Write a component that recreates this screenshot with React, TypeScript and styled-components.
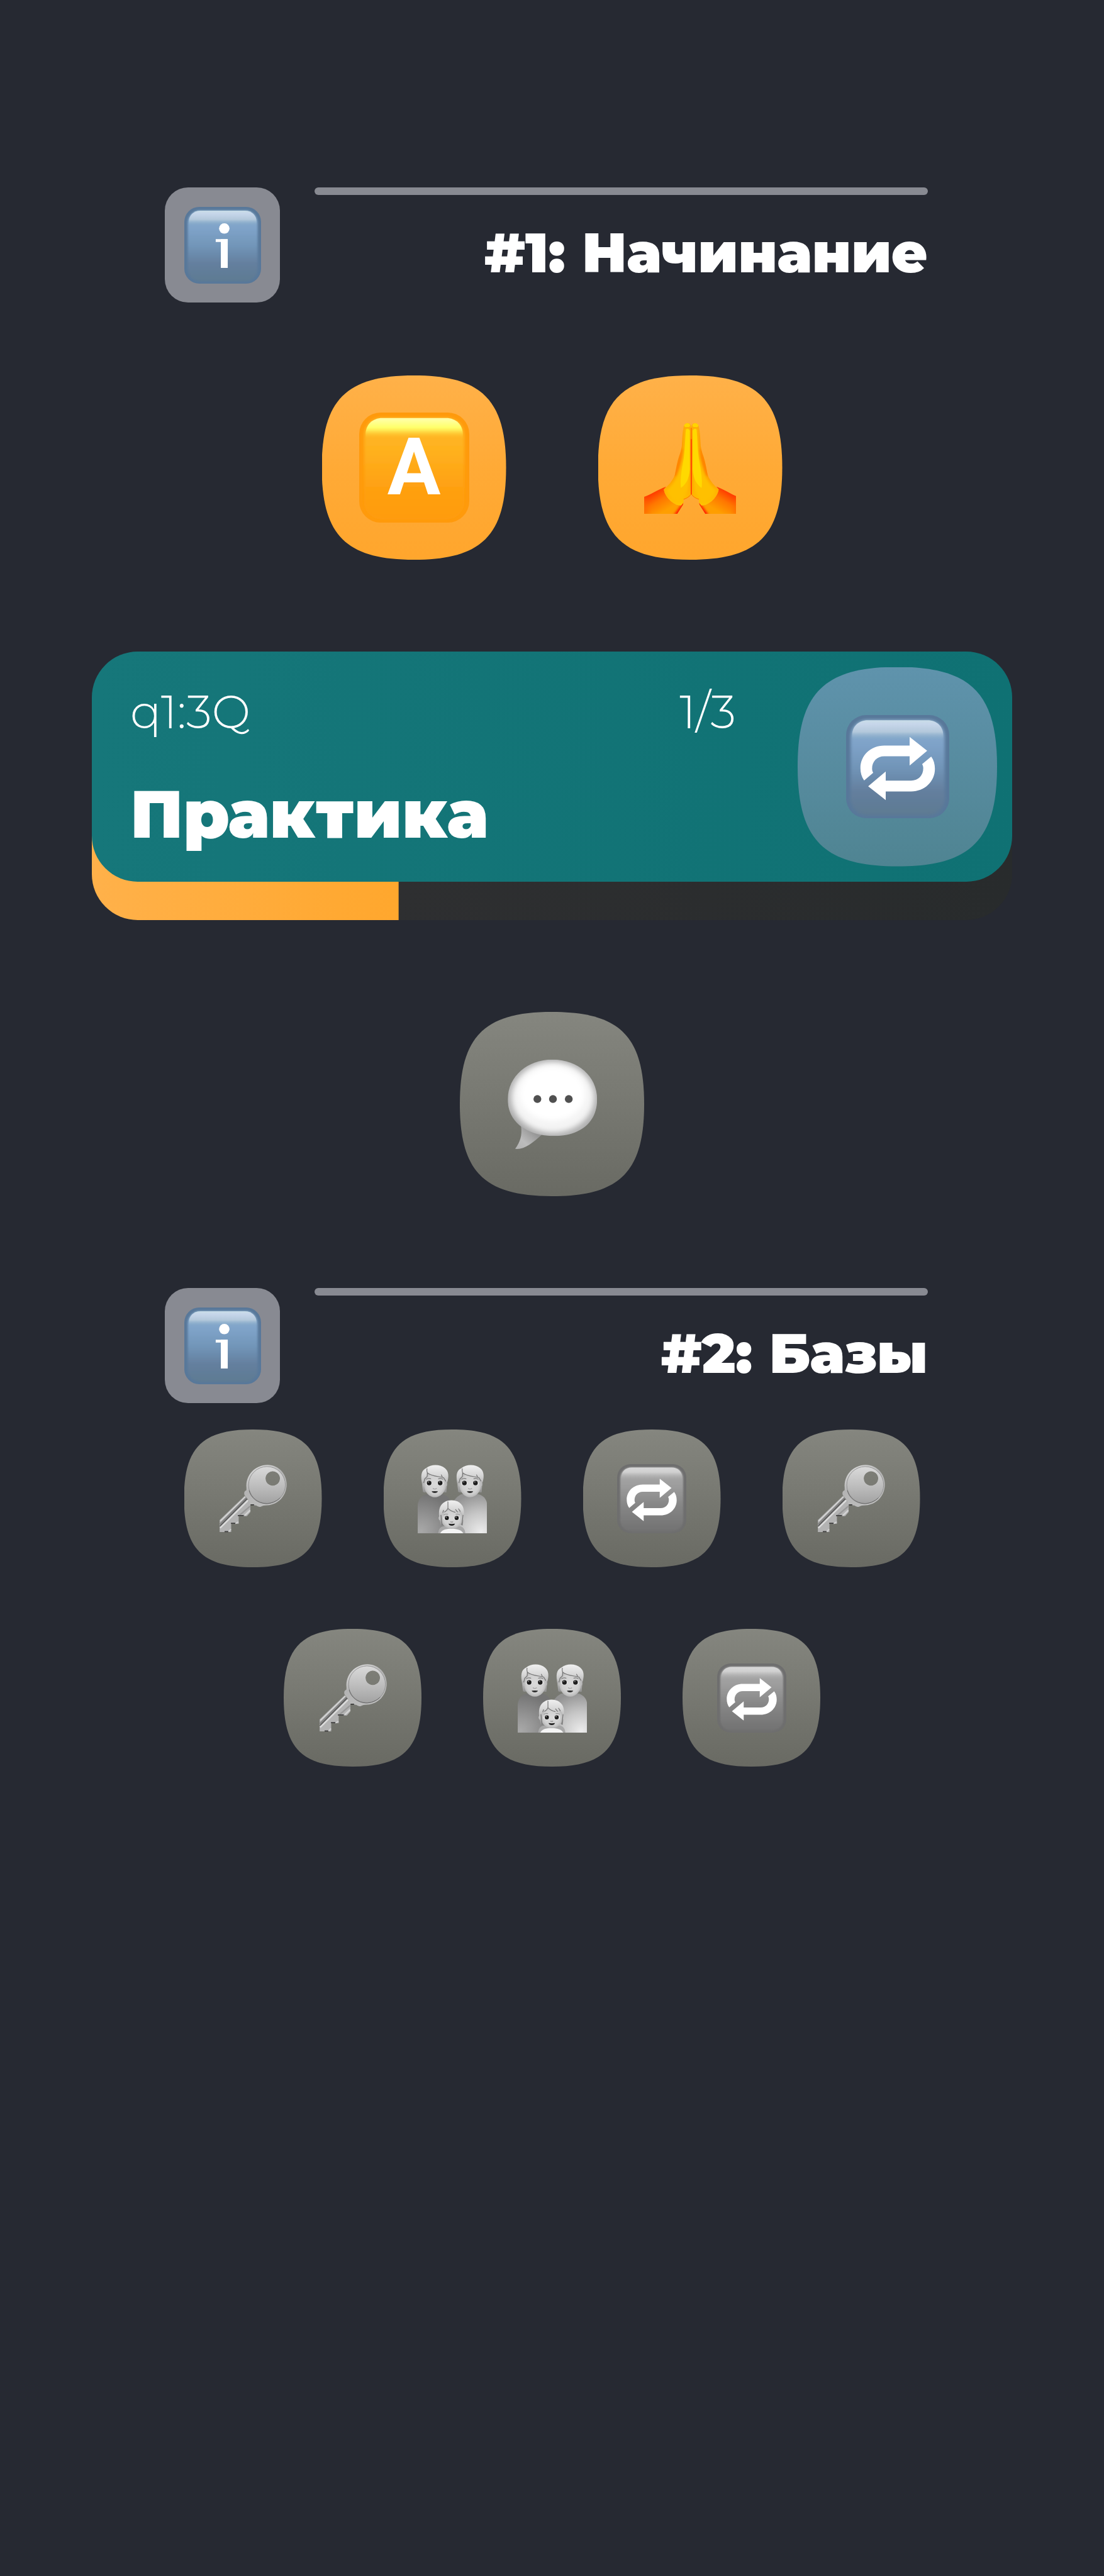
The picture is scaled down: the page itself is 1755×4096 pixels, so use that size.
import React from "react";
import styled, { createGlobalStyle } from "styled-components";

const GlobalStyle = createGlobalStyle`
  *, *::before, *::after { box-sizing: border-box; }
  body { margin: 0; background: #262932; }
`;

const fontStack = `Montserrat, Inter, "Open Sans", sans-serif`;

const Page = styled.main`
  min-height: 100vh;
  padding: 298px 0 146px;
  background: #262932;
  color: #fff;
  font-family: ${fontStack};
`;

const HiddenDefs = styled.svg`
  position: absolute;
  width: 0;
  height: 0;
`;

const SectionHeader = styled.header`
  display: flex;
  align-items: flex-start;
  gap: 55px;
  padding: 0 280px 0 262px;
`;

const InfoButton = styled.button`
  display: grid;
  place-items: center;
  flex: none;
  width: 183px;
  height: 183px;
  padding: 0;
  border: 0;
  border-radius: 37px;
  background: #888a92;
  cursor: pointer;
`;

const TitleColumn = styled.div`
  flex: 1;
  display: flex;
  flex-direction: column;
  gap: 42px;
`;

const Rule = styled.hr`
  width: 100%;
  height: 12px;
  margin: 0;
  border: 0;
  border-radius: 6px;
  background: #888a92;
`;

const SectionTitle = styled.h2`
  margin: 0;
  font-size: 88px;
  font-weight: 900;
  line-height: 100px;
  text-align: right;
  white-space: nowrap;
`;

const tones = {
  active: "linear-gradient(#ffb149, #ffaa36 50%, #ffa62d)",
  locked: "linear-gradient(#85867f, #696a63)",
  card: "linear-gradient(#5f93ac, #4f8492)",
};

const Tile = styled.button<{ $tone: keyof typeof tones; $size: number }>`
  display: grid;
  place-items: center;
  flex: none;
  width: ${(p) => p.$size}px;
  height: ${(p) => p.$size}px;
  padding: 0;
  border: 0;
  background: ${(p) => tones[p.$tone]};
  clip-path: url(#squircle);
  cursor: pointer;
`;

const Glyph = styled.svg<{ $size: number }>`
  display: block;
  width: ${(p) => p.$size}px;
  height: ${(p) => p.$size}px;
`;

const TileRow = styled.div<{ $top: number; $gap: number }>`
  display: flex;
  justify-content: center;
  gap: ${(p) => p.$gap}px;
  margin-top: ${(p) => p.$top}px;
`;

const LessonCard = styled.article<{ $progress: number }>`
  margin: 146px 146px 0;
  padding-bottom: 61px;
  border-radius: 73px;
  background:
    linear-gradient(90deg, #ffb14a, #ffa72d) left bottom / ${(p) => p.$progress}% 134px no-repeat,
    linear-gradient(90deg, #313133, #282b2c) left bottom / 100% 134px no-repeat;
`;

const CardPanel = styled.div`
  display: flex;
  align-items: center;
  gap: 98px;
  height: 366px;
  padding: 0 24px 0 61px;
  border-radius: 73px;
  background: linear-gradient(90deg, #16777a, #0f7173);
`;

const CardText = styled.div`
  flex: 1;
  display: flex;
  flex-direction: column;
  gap: 62px;
`;

const CardMeta = styled.div`
  display: flex;
  justify-content: space-between;
  font-size: 73px;
  font-weight: 300;
  line-height: 88px;
`;

const CardTitle = styled.h3`
  margin: 0;
  font-size: 105px;
  font-weight: 900;
  line-height: 112px;
`;

const HeaderGap = styled.div`
  margin-top: 146px;
`;

function Defs() {
  return (
    <HiddenDefs aria-hidden="true">
      <defs>
        <clipPath id="squircle" clipPathUnits="objectBoundingBox">
          <path d="M0 .5C0 .132 .132 0 .5 0S1 .132 1 .5 .868 1 .5 1 0 .868 0 .5Z" />
        </clipPath>
        <filter id="b1" x="-20%" y="-20%" width="140%" height="140%"><feGaussianBlur stdDeviation="1.2" /></filter>
        <filter id="b3" x="-30%" y="-30%" width="160%" height="160%"><feGaussianBlur stdDeviation="3" /></filter>
        <filter id="b8" x="-50%" y="-50%" width="200%" height="200%"><feGaussianBlur stdDeviation="9" /></filter>
        <filter id="b20" x="-50%" y="-50%" width="200%" height="200%"><feGaussianBlur stdDeviation="20" /></filter>
        <linearGradient id="blueBody" x2="0" y2="1">
          <stop offset="0" stopColor="#8db0cc" /><stop offset=".25" stopColor="#7fa3c9" />
          <stop offset=".5" stopColor="#7195b8" /><stop offset=".75" stopColor="#647f9e" /><stop offset="1" stopColor="#5d7a92" />
        </linearGradient>
        <linearGradient id="blueShine" x2="0" y2="1">
          <stop offset="0" stopColor="#c9dde8" /><stop offset=".2" stopColor="#c6d6ea" />
          <stop offset=".6" stopColor="#b3c8db" /><stop offset="1" stopColor="#86abc8" stopOpacity="0" />
        </linearGradient>
        <linearGradient id="orangeBody" x2="0" y2="1">
          <stop offset="0" stopColor="#ffb828" /><stop offset=".3" stopColor="#ffb21f" />
          <stop offset=".7" stopColor="#ffa011" /><stop offset="1" stopColor="#ff9c10" />
        </linearGradient>
        <linearGradient id="orangeShine" x2="0" y2="1">
          <stop offset="0" stopColor="#ffffae" /><stop offset=".45" stopColor="#ffff6a" />
          <stop offset=".6" stopColor="#ffe650" /><stop offset="1" stopColor="#ffb622" stopOpacity="0" />
        </linearGradient>
        <linearGradient id="grayBody" x2="0" y2="1">
          <stop offset="0" stopColor="#acacac" /><stop offset=".3" stopColor="#9c9c9c" />
          <stop offset=".6" stopColor="#868686" /><stop offset="1" stopColor="#727272" />
        </linearGradient>
        <linearGradient id="grayShine" x2="0" y2="1">
          <stop offset="0" stopColor="#d8d8d8" /><stop offset=".35" stopColor="#d0d0d0" />
          <stop offset="1" stopColor="#a4a4a4" stopOpacity="0" />
        </linearGradient>
        <linearGradient id="sleeve" gradientUnits="userSpaceOnUse" x1="500" y1="975" x2="590" y2="1120">
          <stop offset="0" stopColor="#ff3a00" /><stop offset=".45" stopColor="#ff7600" /><stop offset="1" stopColor="#ff9e00" />
        </linearGradient>
        <linearGradient id="skin" gradientUnits="userSpaceOnUse" x1="0" y1="430" x2="0" y2="1080">
          <stop offset="0" stopColor="#ffae10" /><stop offset=".35" stopColor="#ff9200" />
          <stop offset=".7" stopColor="#ffa200" /><stop offset="1" stopColor="#ffc400" />
        </linearGradient>
        <clipPath id="palm">
          <path d="M779 462C777 424 725 420 720 466C711 510 710 560 707 612C703 642 697 665 687 692C671 740 664 790 655 838C644 875 618 910 588 940L570 957C576 1010 640 1086 702 1083L720 1060V1038C745 1030 765 1020 779 995Z" />
        </clipPath>
        <clipPath id="cuff">
          <path d="M588 935C520 960 470 1000 420 1016V1150H672L716 1078L720 1060L702 1083C640 1086 576 1010 570 957Z" />
        </clipPath>
        <clipPath id="balloon">
          <path d="M784 430C985 430 1138 560 1138 745C1138 930 1000 1034 800 1034C590 1034 432 930 432 745C432 560 590 430 784 430Z" />
        </clipPath>
        <linearGradient id="tail" gradientUnits="userSpaceOnUse" x1="500" y1="1120" x2="620" y2="990">
          <stop offset="0" stopColor="#b4b4b4" /><stop offset=".4" stopColor="#bcbcbc" /><stop offset="1" stopColor="#979797" />
        </linearGradient>
        <linearGradient id="bow" x2="0" y2="1">
          <stop offset="0" stopColor="#dadada" /><stop offset=".55" stopColor="#bcbcbc" /><stop offset="1" stopColor="#a2a2a2" />
        </linearGradient>
        <linearGradient id="rim" x2=".6" y2="1">
          <stop offset="0" stopColor="#e6e6e6" /><stop offset=".5" stopColor="#b4b4b4" /><stop offset="1" stopColor="#bdbdbd" />
        </linearGradient>
        <linearGradient id="hair" x2="0" y2="1">
          <stop offset="0" stopColor="#f0f0f0" /><stop offset=".35" stopColor="#d8d8d8" /><stop offset=".7" stopColor="#b4b4b4" /><stop offset="1" stopColor="#909090" />
        </linearGradient>
        <radialGradient id="face" cx=".5" cy=".48" r=".6">
          <stop offset="0" stopColor="#dadada" /><stop offset=".65" stopColor="#cfcfcf" /><stop offset="1" stopColor="#a6a6a6" />
        </radialGradient>
        <radialGradient id="shirtDark" gradientUnits="userSpaceOnUse" cx="370" cy="870" r="300">
          <stop offset="0" stopColor="#a8a8a8" /><stop offset=".35" stopColor="#979797" /><stop offset="1" stopColor="#747474" />
        </radialGradient>
        <radialGradient id="shirtLight" gradientUnits="userSpaceOnUse" cx="860" cy="880" r="320">
          <stop offset="0" stopColor="#ececec" /><stop offset=".5" stopColor="#c6c6c6" /><stop offset="1" stopColor="#929292" />
        </radialGradient>
      </defs>
    </HiddenDefs>
  );
}

const keycapEdge = { blue: "#58789a", orange: "#ff9a0c", gray: "#6e6e6e" };

function Keycap({ tone }: { tone: keyof typeof keycapEdge }) {
  return (
    <>
      <rect width="100" height="100" rx="19.5" fill={keycapEdge[tone]} />
      <rect x="4.5" y="4.5" width="91" height="92.5" rx="16" fill={`url(#${tone}Body)`} filter="url(#b1)" />
      <path d="M5.8 24V20C5.8 11 12 5 21 5H79C88 5 94.2 11 94.2 20V24Z" fill={`url(#${tone}Shine)`} />
    </>
  );
}

function InfoGlyph() {
  return (
    <Glyph $size={122} viewBox="0 0 100 100" aria-hidden="true">
      <Keycap tone="blue" />
      <circle cx="52.1" cy="28.1" r="6.8" fill="#fff" />
      <rect x="40.9" y="42" width="15.7" height="3.7" fill="#fff" />
      <rect x="47.6" y="42" width="9" height="37.5" fill="#fff" />
    </Glyph>
  );
}

function LetterGlyph() {
  return (
    <Glyph $size={175} viewBox="0 0 100 100" aria-hidden="true">
      <Keycap tone="orange" />
      <text x="49.8" y="74.3" textAnchor="middle" fontFamily="Roboto, sans-serif" fontWeight="700" fontSize="72" fill="#fff">A</text>
    </Glyph>
  );
}

function RepeatGlyph({ size, tone }: { size: number; tone: "blue" | "gray" }) {
  const arrow =
    "M61.6 21.2L78.6 34.6L61.6 48.9V40H37C30 40 25.2 45 25.2 52C25.2 53.6 25.6 54.8 26.3 56L17.5 63.4C15 60 13.9 56 13.9 51.4C13.9 39 24 29.5 37 29.5H61.6Z";
  return (
    <Glyph $size={size} viewBox="0 0 100 100" aria-hidden="true">
      <Keycap tone={tone} />
      <path d={arrow} fill="#fff" />
      <path d={arrow} fill="#fff" transform="rotate(180 50 51.8)" />
    </Glyph>
  );
}

function PrayHand() {
  return (
    <>
      <g clipPath="url(#cuff)">
        <rect x="400" y="900" width="340" height="260" fill="url(#sleeve)" />
        <path d="M400 930V1160H450Z" fill="#ff6a00" filter="url(#b20)" />
        <path d="M740 1050L660 1165H700L750 1090Z" fill="#ff0a00" stroke="#ff0a00" strokeWidth="26" filter="url(#b8)" />
      </g>
      <g clipPath="url(#palm)">
        <rect x="560" y="400" width="230" height="700" fill="url(#skin)" />
        <path d="M722 640C700 700 680 780 655 850" stroke="#ff7800" strokeWidth="22" fill="none" filter="url(#b8)" />
        <path d="M735 480C752 466 764 480 766 500V880C764 960 745 1000 690 1065C640 1050 600 1000 590 965C650 910 690 830 712 700C722 620 726 550 735 480Z" fill="#ffc000" filter="url(#b8)" />
        <path d="M738 485C746 472 762 476 768 492V800C764 860 748 910 700 945C692 880 706 800 722 710C732 620 732 560 738 485Z" fill="#ffd900" filter="url(#b3)" />
        <ellipse cx="747" cy="450" rx="23" ry="17" fill="#ffd400" filter="url(#b3)" />
        <path d="M722 478C735 464 760 462 778 472" stroke="#ffae00" strokeWidth="5" fill="none" />
        <path d="M780 470V1000C765 1020 750 1030 722 1038" stroke="#ff7a00" strokeWidth="12" fill="none" filter="url(#b3)" />
        <path d="M782 560V1000" stroke="#ff3000" strokeWidth="13" fill="none" />
      </g>
    </>
  );
}

function PrayGlyph() {
  return (
    <Glyph $size={146} viewBox="420 424 700 726" preserveAspectRatio="none" aria-hidden="true">
      <PrayHand />
      <g transform="matrix(-1 0 0 1 1558 0)">
        <PrayHand />
      </g>
    </Glyph>
  );
}

function ChatGlyph() {
  return (
    <Glyph $size={146} viewBox="421 421 726 726" aria-hidden="true">
      <path d="M536 950C548 1030 530 1080 490 1136C560 1144 630 1090 700 1024Z" fill="url(#tail)" />
      <g clipPath="url(#balloon)">
        <rect x="421" y="421" width="726" height="640" fill="#b2b2b2" />
        <path d="M430 850C500 960 580 1040 720 1060H950C1050 1020 1120 930 1150 850V1060H430Z" fill="#8a8a8a" filter="url(#b20)" />
        <ellipse cx="788" cy="728" rx="326" ry="278" fill="#f4f4f4" filter="url(#b20)" />
        <ellipse cx="785" cy="700" rx="260" ry="215" fill="#fff" filter="url(#b20)" />
      </g>
      <circle cx="666" cy="742" r="31" fill="#505050" />
      <circle cx="789" cy="742" r="31" fill="#505050" />
      <circle cx="914" cy="742" r="31" fill="#505050" />
    </Glyph>
  );
}

function KeyGlyph() {
  return (
    <Glyph $size={110} viewBox="341 326 563 563" aria-hidden="true">
      <path d="M556 584L352 782V879H446V812H507V750H574L602 716V650Z" fill="#b3b3b3" />
      <path d="M562 592L358 790" stroke="#d6d6d6" strokeWidth="9" />
      <path d="M572 604L356 820" stroke="#888" strokeWidth="22" />
      <path d="M574 610L354 832" stroke="#5c5c5c" strokeWidth="9" />
      <path d="M584 620L356 846" stroke="#dcdcdc" strokeWidth="12" />
      <path d="M600 668L512 744" stroke="#999" strokeWidth="12" />
      <path d="M600 702L556 744" stroke="#d4d4d4" strokeWidth="12" />
      <path d="M500 745H548M444 808H488M392 876H424" stroke="#3e3e3e" strokeWidth="9" />
      <path d="M480 810L505 796M424 876L444 856" stroke="#d0d0d0" strokeWidth="10" />
      <path
        fillRule="evenodd"
        d="M570 520C562 415 640 334 742 333C835 334 898 410 897 492C896 585 830 655 740 661C715 662 700 665 690 671C675 677 662 672 652 664L600 655L580 610L556 580C548 562 552 546 570 538ZM784 384A59 59 0 1 0 784.1 384Z"
        fill="url(#rim)"
      />
      <path
        fillRule="evenodd"
        d="M737 346A150 150 0 1 0 737.1 346ZM784 384A59 59 0 1 0 784.1 384Z"
        fill="url(#bow)"
      />
      <circle cx="737" cy="496" r="150" fill="none" stroke="#858585" strokeWidth="4" />
      <path d="M592 540C606 600 660 645 730 648C770 648 815 630 845 600" fill="none" stroke="#646464" strokeWidth="5" />
      <path d="M604 657H632" stroke="#2f2f2f" strokeWidth="8" />
    </Glyph>
  );
}

function AdultHead() {
  return (
    <>
      <path d="M378 470C366 400 385 372 415 358C450 326 530 326 565 358C600 385 600 430 584 480L578 556H562L480 500L406 558L388 552Z" fill="url(#hair)" />
      <path d="M388 470C378 490 388 512 398 514M580 470C590 490 582 508 570 514" fill="#bcbcbc" stroke="#999" strokeWidth="3" />
      <path d="M420 418C400 440 394 470 398 505C402 555 440 596 485 596C530 596 568 555 574 505C576 470 572 450 552 432C510 432 450 425 420 392Z" fill="url(#face)" />
      <path d="M421 362C418 385 420 395 428 400C455 422 500 424 556 436L574 466M536 412L546 432M424 398L422 428L402 446L394 480" fill="none" stroke="#747474" strokeWidth="6" strokeLinejoin="round" />
      <path d="M414 450Q432 438 454 446M512 446Q534 438 552 450" fill="none" stroke="#787878" strokeWidth="6" />
      <ellipse cx="437" cy="483" rx="25" ry="17" fill="#f2f2f2" />
      <ellipse cx="530" cy="483" rx="25" ry="17" fill="#f2f2f2" />
      <circle cx="438" cy="480" r="19" fill="#1c1c1c" />
      <circle cx="528" cy="480" r="19" fill="#1c1c1c" />
      <circle cx="433" cy="472" r="5" fill="#888" />
      <circle cx="523" cy="472" r="5" fill="#888" />
      <path d="M468 523Q484 536 500 523" fill="none" stroke="#a0a0a0" strokeWidth="6" />
      <path d="M459 547Q484 544 509 547Q504 561 484 561Q464 561 459 547Z" fill="#2e2e2e" />
    </>
  );
}

function FamilyGlyph() {
  return (
    <Glyph $size={110} viewBox="345 326 563 563" aria-hidden="true">
      <path d="M345 889V660C350 610 380 575 420 570H550C585 580 612 612 620 650V889Z" fill="url(#shirtDark)" />
      <path d="M640 889V622C665 590 690 572 710 570H836C875 580 900 605 908 642V889Z" fill="url(#shirtLight)" />
      <AdultHead />
      <g transform="translate(287 0)"><AdultHead /></g>
      <path d="M512 889C515 855 530 835 560 832H690C718 840 730 860 732 889Z" fill="#a8a8a8" />
      <path d="M528 889C545 858 580 852 622 852S700 862 716 889Z" fill="#f4f4f4" filter="url(#b3)" />
      <path d="M520 760C512 690 530 655 565 635C590 615 655 615 685 640C718 665 728 700 718 770L712 826L660 800H570L532 824Z" fill="url(#hair)" />
      <path d="M526 750C512 750 512 780 526 784M716 750C730 752 726 778 714 784" fill="#c4c4c4" />
      <path d="M556 710C538 735 534 760 538 785C546 825 580 852 622 852C664 852 700 825 710 785C714 750 706 725 690 705C660 718 620 712 592 688C580 708 570 715 556 710Z" fill="url(#face)" />
      <path d="M591 630V686C610 705 630 714 652 718M591 686C584 700 574 712 562 716M652 694L670 718M676 688L692 712M556 700L548 722M534 740L544 824M714 740L704 824" fill="none" stroke="#747474" strokeWidth="6" />
      <path d="M556 740Q572 728 592 734M654 734Q674 728 688 740" fill="none" stroke="#8a8a8a" strokeWidth="5" />
      <ellipse cx="580" cy="768" rx="24" ry="16" fill="#f4f4f4" />
      <ellipse cx="662" cy="768" rx="24" ry="16" fill="#f4f4f4" />
      <circle cx="582" cy="765" r="17" fill="#1c1c1c" />
      <circle cx="662" cy="765" r="17" fill="#1c1c1c" />
      <circle cx="577" cy="758" r="5" fill="#999" />
      <circle cx="657" cy="758" r="5" fill="#999" />
      <path d="M611 794Q622 802 633 794" fill="none" stroke="#8c8c8c" strokeWidth="6" />
      <path d="M596 811Q622 816 648 811Q642 828 622 828Q602 828 596 811Z" fill="#1f1f1f" />
    </Glyph>
  );
}

function Header({ title }: { title: string }) {
  return (
    <SectionHeader>
      <InfoButton type="button" aria-label="Информация">
        <InfoGlyph />
      </InfoButton>
      <TitleColumn>
        <Rule />
        <SectionTitle>{title}</SectionTitle>
      </TitleColumn>
    </SectionHeader>
  );
}

type Kind = "key" | "family" | "repeat";
const lessonRows: Kind[][] = [
  ["key", "family", "repeat", "key"],
  ["key", "family", "repeat"],
];
const kindLabels: Record<Kind, string> = { key: "Ключ", family: "Семья", repeat: "Повтор" };

function LockedTile({ kind }: { kind: Kind }) {
  return (
    <Tile type="button" $tone="locked" $size={219} aria-label={kindLabels[kind]}>
      {kind === "key" && <KeyGlyph />}
      {kind === "family" && <FamilyGlyph />}
      {kind === "repeat" && <RepeatGlyph size={110} tone="gray" />}
    </Tile>
  );
}

export default function App() {
  return (
    <Page>
      <GlobalStyle />
      <Defs />
      <Header title="#1: Начинание" />
      <TileRow $top={116} $gap={146}>
        <Tile type="button" $tone="active" $size={293} aria-label="Алфавит">
          <LetterGlyph />
        </Tile>
        <Tile type="button" $tone="active" $size={293} aria-label="Приветствие">
          <PrayGlyph />
        </Tile>
      </TileRow>
      <LessonCard $progress={100 / 3}>
        <CardPanel>
          <CardText>
            <CardMeta>
              <span>q1:3Q</span>
              <span>1/3</span>
            </CardMeta>
            <CardTitle>Практика</CardTitle>
          </CardText>
          <Tile type="button" $tone="card" $size={317} aria-label="Повторить">
            <RepeatGlyph size={164} tone="blue" />
          </Tile>
        </CardPanel>
      </LessonCard>
      <TileRow $top={146} $gap={146}>
        <Tile type="button" $tone="locked" $size={293} aria-label="Диалог">
          <ChatGlyph />
        </Tile>
      </TileRow>
      <HeaderGap>
        <Header title="#2: Базы" />
      </HeaderGap>
      <TileRow $top={42} $gap={98}>
        {lessonRows[0].map((kind, i) => <LockedTile key={i} kind={kind} />)}
      </TileRow>
      <TileRow $top={98} $gap={98}>
        {lessonRows[1].map((kind, i) => <LockedTile key={i} kind={kind} />)}
      </TileRow>
    </Page>
  );
}
